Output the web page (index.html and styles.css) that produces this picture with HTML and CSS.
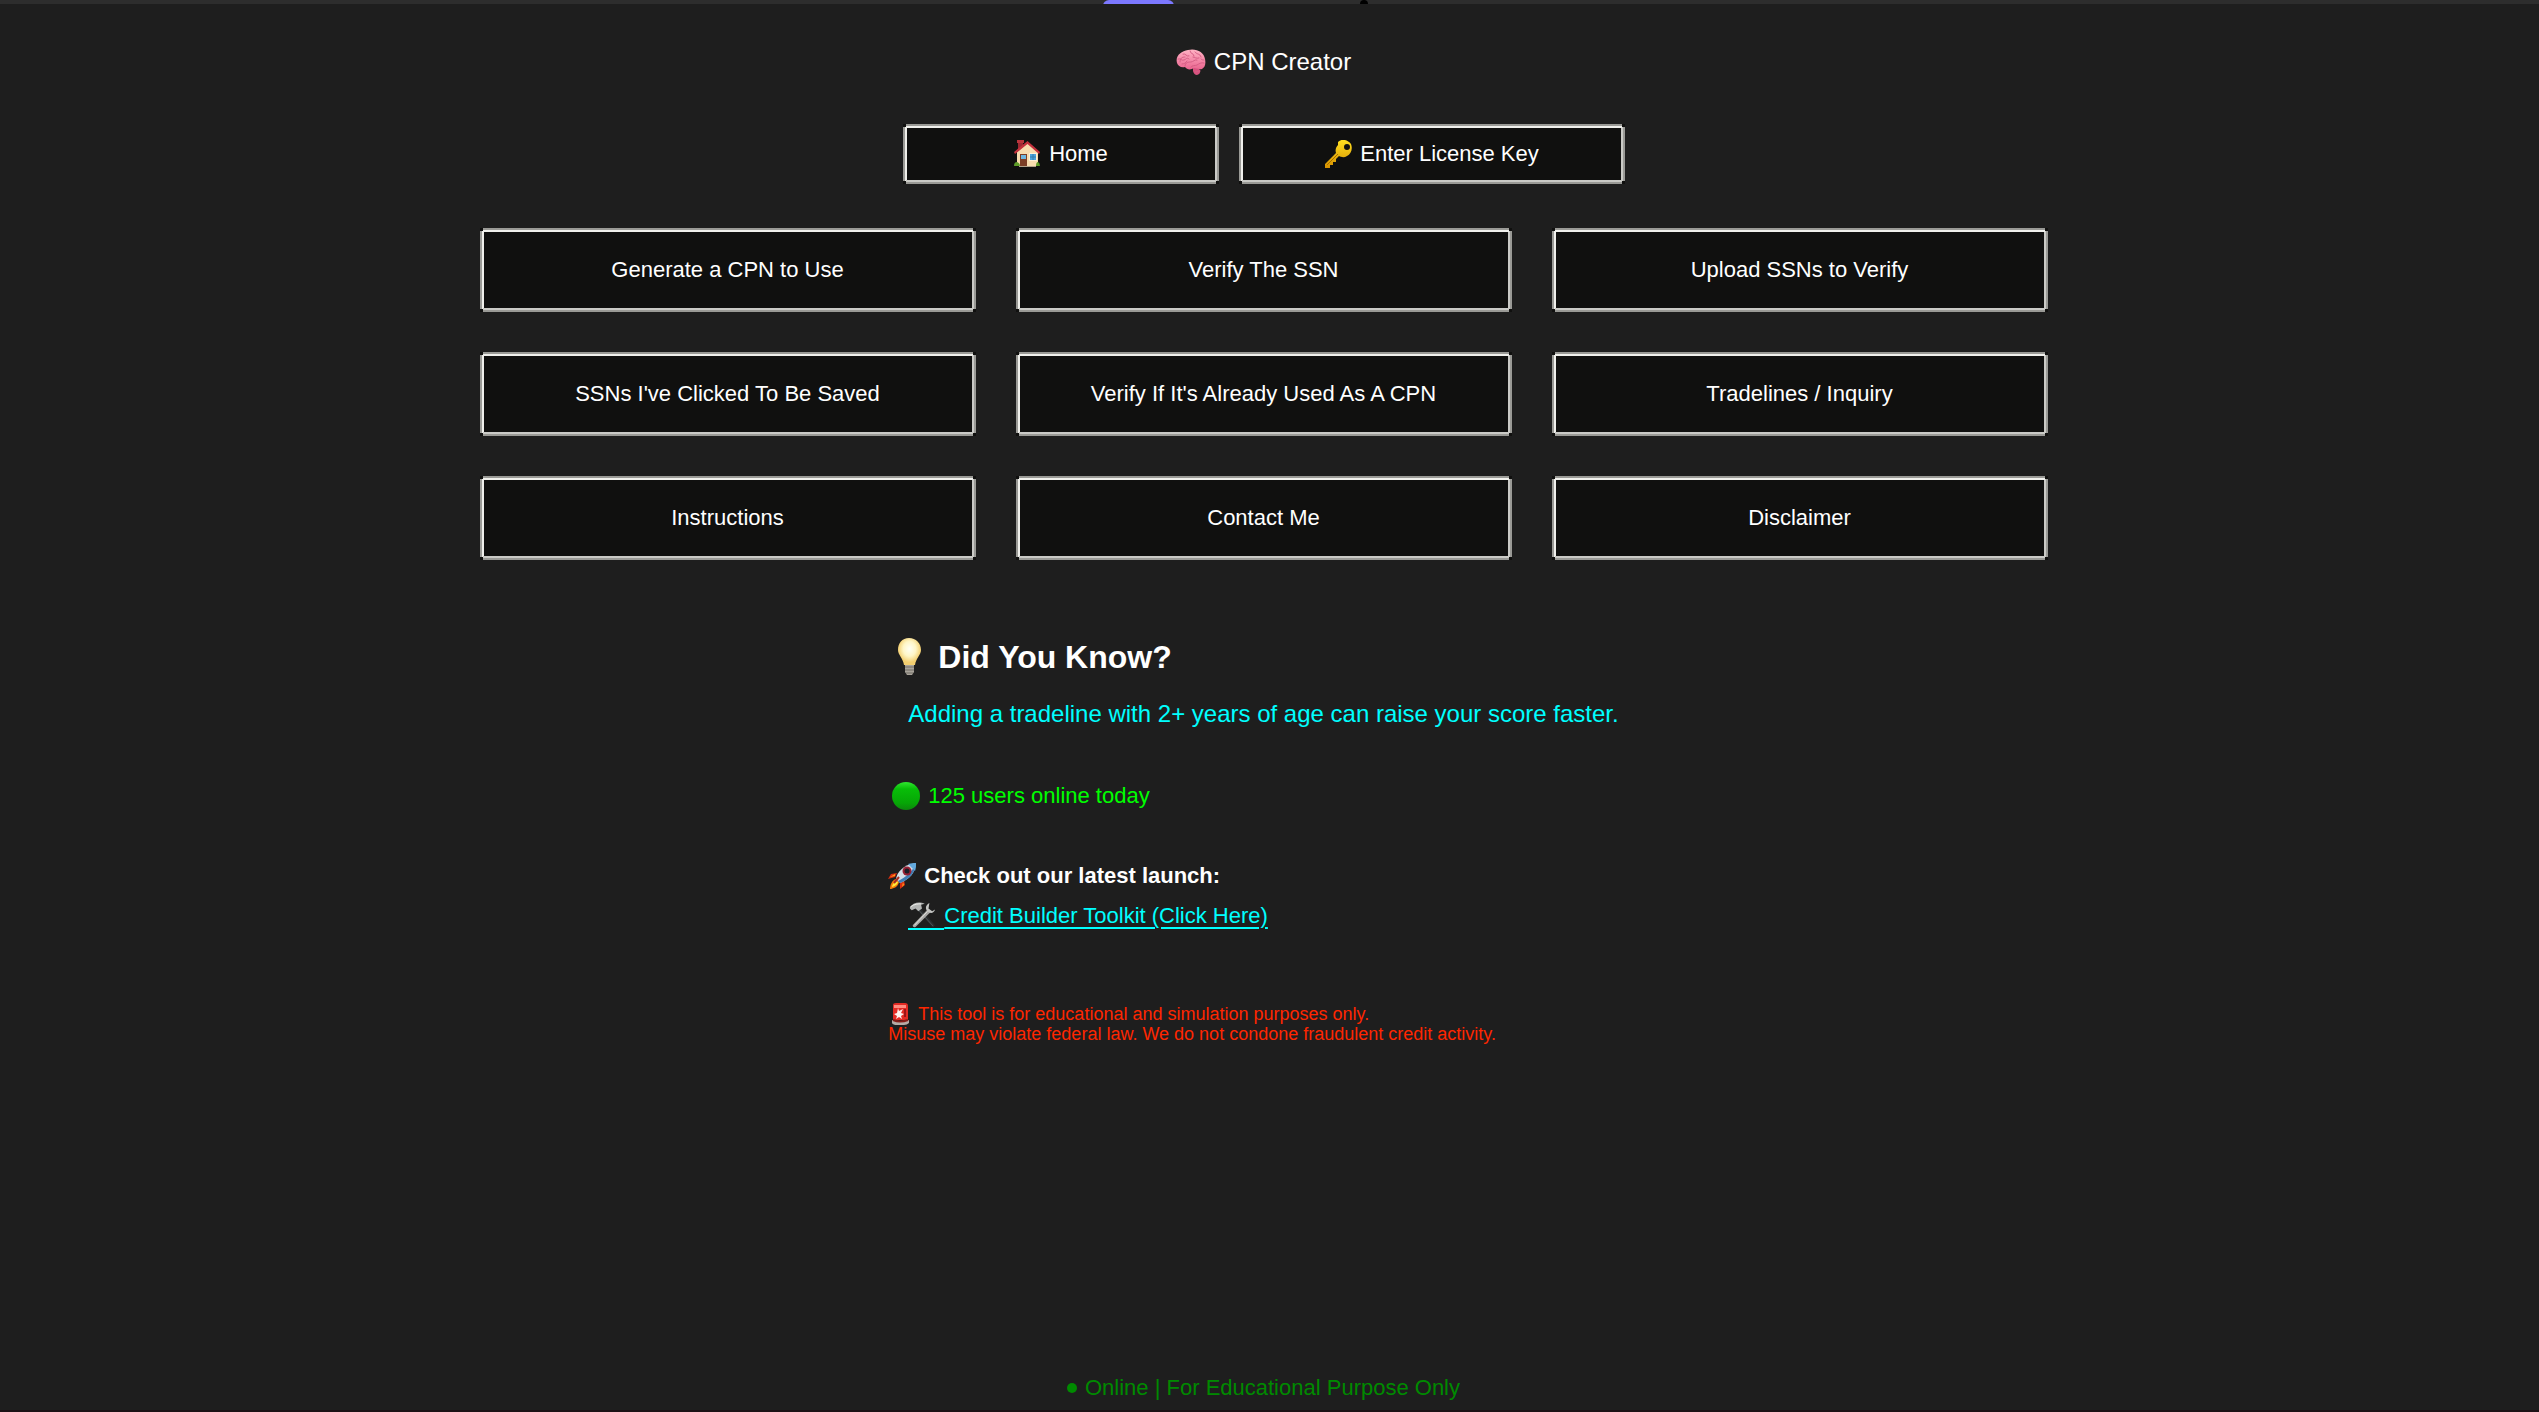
FILE: index.html
```html
<!DOCTYPE html>
<html lang="en">
<head>
<meta charset="utf-8">
<title>CPN Creator</title>
<link rel="stylesheet" href="styles.css">
</head>
<body>
<div class="topbar"><span class="tab"></span><span class="notch"></span></div>
<main class="page">
  <h1 class="title">
    <svg class="icon brain" viewBox="0 0 30 28" aria-hidden="true">
      <defs><linearGradient id="pink" x1="0" y1="0" x2="0" y2="1"><stop offset="0" stop-color="#ffb3c4"/><stop offset="1" stop-color="#ea6590"/></linearGradient></defs>
      <path d="M17 20q5-1 7 2 1 4-3 5-3 0-4-4z" fill="#d8527f"/>
      <path d="M1 15C-1 8 5 3 12 2c8-2 16 2 17 9 1 5 0 8-3 10-3 1-5-1-8-1-3 2-7 2-9-1-4 1-7-1-8-4z" fill="url(#pink)"/>
      <path d="M4 14c0-4 2-5 5-5M7 6c3-1 3 3 6 2M14 3c0 3 4 2 4 5M19 4c2 3 5 1 6 5M2 11c3-1 3 2 6 1s2-3 5-1M9 18c0-4 4-4 6-4s4-3 6-2M15 19c1-2 4-1 6-2s4-3 7-2M17 9c2 0 3 2 6 1M6 16c2 0 4-1 5-3M25 11c1 1 2 1 3 1M19 24l5-1" fill="none" stroke="#d65e85" stroke-width="1" stroke-linecap="round"/>
    </svg>
    CPN Creator
  </h1>

  <nav class="nav">
    <button class="button home" type="button">
      <svg class="icon" viewBox="0 0 28 28" aria-hidden="true">
        <path d="M5 1h5v9H5z" fill="#9e2932"/><path d="M4 0h7v3H4z" fill="#b9343b"/>
        <path d="M4 12 14.500 3 25 12v14H4z" fill="#f8dcae"/>
        <path d="m2 14-1-2L14.500 1 27 12l-1 2L14.500 4z" fill="#c4313d"/>
        <path d="M7 14h7v12H7z" fill="#7c3e25"/><path d="M8 15h5v4H8z" fill="#6fb5de"/>
        <path d="M16 13h8v8h-8z" fill="#fff0d3"/><path d="M17 14h6v6h-6z" fill="#4ba4dd"/><path d="M20 14v6M17 17h6" stroke="#377ca9"/>
        <path d="M1 26q0-4 3-4 3 1 3 4zM23 26q0-4 2-4 2 1 2 4z" fill="#5e9c28"/><path d="M6 26h17v1H6z" fill="#b3a28a"/>
      </svg>
      Home
    </button>
    <button class="button license" type="button">
      <svg class="icon" viewBox="0 0 28 28" aria-hidden="true">
        <defs><linearGradient id="gold" x1="0" y1="0" x2="0" y2="1"><stop offset="0" stop-color="#ffdf20"/><stop offset="1" stop-color="#d69100"/></linearGradient></defs>
        <path fill-rule="evenodd" d="M14 2c4-4 10-2 13 2 2 5 0 10-4 12-3 2-6 1-8 0l-3 3v3H9v3H6v3H1v-4l11-11c-1-3 0-6 2-8zm9 2a3 3 0 1 0 0 6 3 3 0 0 0 0-6z" fill="url(#gold)"/>
        <path d="m3 25 11-11" stroke="#a96d00"/>
      </svg>
      Enter License Key
    </button>
  </nav>

  <section class="grid">
    <button class="button tall" type="button">Generate a CPN to Use</button>
    <button class="button tall" type="button">Verify The SSN</button>
    <button class="button tall" type="button">Upload SSNs to Verify</button>
    <button class="button tall" type="button">SSNs I've Clicked To Be Saved</button>
    <button class="button tall" type="button">Verify If It's Already Used As A CPN</button>
    <button class="button tall" type="button">Tradelines / Inquiry</button>
    <button class="button tall" type="button">Instructions</button>
    <button class="button tall" type="button">Contact Me</button>
    <button class="button tall" type="button">Disclaimer</button>
  </section>

  <section class="info">
    <h2 class="heading">
      <svg class="icon bulb" viewBox="0 0 42 40" aria-hidden="true">
        <defs><radialGradient id="glow" cx=".5" cy=".4"><stop offset="0" stop-color="#fffff4"/><stop offset=".55" stop-color="#fff6c6"/><stop offset="1" stop-color="#f3cf70"/></radialGradient></defs>
        <path d="M21 1c7 0 12 5 12 12 0 5-5 8-6 15H16C15 21 10 18 10 13 10 6 14 1 21 1z" fill="url(#glow)"/>
        <path d="M17 28h9v7l-2 3h-5l-2-3z" fill="#a8a39a"/><path d="M17 30h9M17 33h9M18 36h7" stroke="#716c65"/>
      </svg>
      Did You Know?
    </h2>
    <p class="tip">Adding a tradeline with 2+ years of age can raise your score faster.</p>
    <p class="users">
      <svg class="icon" viewBox="0 0 28 28" aria-hidden="true">
        <defs><linearGradient id="green" x1="0" y1="0" x2="0" y2="1"><stop offset="0" stop-color="#2fe62f"/><stop offset=".25" stop-color="#08bd08"/><stop offset=".75" stop-color="#06a606"/><stop offset="1" stop-color="#0d850d"/></linearGradient></defs>
        <circle cx="14" cy="14" r="14" fill="url(#green)"/>
      </svg>
      125 users online today
    </p>
    <p class="launch">
      <svg class="icon" viewBox="0 0 28 28" aria-hidden="true">
        <path d="M9 11 3 12 0 17l7-2zM16 18l1 5-5 4v-7z" fill="#d92d10"/><path d="M7 12 2 15l5-1zM15 20l-1 5 2-2z" fill="#ff9c19"/>
        <path d="M8 17c-4 1-6 6-6 10 3 0 8-2 9-7z" fill="#f67d08"/><path d="M8 19c-2 1-4 4-4 6 3-1 5-2 6-5z" fill="#ffed39"/>
        <path d="M8 17c1-7 7-14 20-16-1 10-6 16-16 20z" fill="#d5dfe8"/><path d="M12 21C22 17 27 11 28 1 25 9 18 15 10 19z" fill="#3f7db6"/>
        <path d="M20 2c3-1 6-1 8-1 0 3 0 5-1 8z" fill="#63a9dd"/>
        <circle cx="19" cy="9" r="4.500" fill="#962033"/><circle cx="19" cy="9" r="2.500" fill="#191d27"/>
        <path d="m6 21 5-6" stroke="#a92b20" stroke-width="2"/>
      </svg>
      Check out our latest launch:
    </p>
    <a class="toolkit" href="#toolkit">
      <span class="tools"><svg class="icon" viewBox="0 0 28 28" aria-hidden="true">
        <path d="m6 5 4-1 18 21-2 2h-1z" fill="#282b2d"/><path d="m8 6 18 20" stroke="#50565a"/>
        <path d="m4 25 16-17 3 3L7 27q-3 1-3-2z" fill="#a8a8a6"/><path d="M6 25 20 10" stroke="#e1e1df"/>
        <path d="M22 1c-4 2-5 6-2 9s7 2 8-2l-3 2-4-3z" fill="#c4c5c3"/>
        <path d="m1 5 4-3c4-2 8-2 12 0l-4 1 1 4-4 3-3-3-4 2-2-2z" fill="#b3b5b4"/><path d="M2 5c4-3 8-3 11-3" fill="none" stroke="#efefed"/>
      </svg></span><span class="link-text">Credit Builder Toolkit (Click Here)</span>
    </a>
    <p class="warning">
      <span class="warning-line"><svg class="icon siren" viewBox="0 0 24 24" aria-hidden="true">
        <path d="M5 3q0-2 3-2h9q3 0 3 3v14H5z" fill="#e42b24"/><path d="M6 3h12v3H6z" fill="#ff8c80"/>
        <path d="M4 18q8 3 17 0v3q-2 2-5 2H9q-4 0-5-2z" fill="#b5aaa5"/><path d="M5 18q7 3 15 0" fill="none" stroke="#861d18" stroke-width="2"/>
        <path d="m10 6 1 3 4-2-2 4 3 1-3 2 1 3-3-2-3 2 1-3-3-2 3-1z" fill="#fff3ef"/><path d="M17 7v8" stroke="#9e1517" stroke-width="2"/>
      </svg>This tool is for educational and simulation purposes only.</span>
      Misuse may violate federal law. We do not condone fraudulent credit activity.
    </p>
  </section>
</main>
<footer class="footer"><span class="dot"></span>Online | For Educational Purpose Only</footer>
</body>
</html>
```
FILE: styles.css
```css
* {
  box-sizing: border-box;
}

body {
  margin: 0;
  min-height: 100vh;
  display: flex;
  flex-direction: column;
  background: #1e1e1e;
  border-bottom: 2px solid #1b1216;
  color: #fff;
  font: 22px/28px "Liberation Sans", Arial, sans-serif;
}

h1, h2, p {
  margin: 0;
}

/* Edge of the window above the page */
.topbar {
  position: relative;
  height: 4px;
  background: #2d2d2d;
  overflow: hidden;
}

.tab, .notch {
  position: absolute;
  top: 0;
}

.tab {
  left: 1103px;
  width: 71px;
  height: 12px;
  border-radius: 8px;
  background: #7c78ff;
}

.notch {
  left: 1360px;
  width: 8px;
  height: 8px;
  border-radius: 4px;
  background: #000;
}

.page {
  flex: 1;
  display: flex;
  flex-direction: column;
  align-items: center;
  padding: 44px 12px 40px 0;
}

.icon {
  flex: none;
  width: 28px;
  height: 28px;
}

.title, .heading, .users, .launch, .button {
  display: flex;
  align-items: center;
  gap: 8px;
}

.title {
  font-size: 24px;
  font-weight: 400;
}

.brain {
  width: 30px;
}

.nav {
  display: flex;
  gap: 20px;
  margin: 48px 0 44px;
}

/* Two-tone ridge frame with open corners */
.button {
  justify-content: center;
  height: 60px;
  padding: 0 20px;
  border: 0;
  color: #fff;
  font: inherit;
  background:
    linear-gradient(#9a9a96 0 2px, #f0f0ec 2px) 3px 0 / calc(100% - 6px) 4px no-repeat,
    linear-gradient(#cacac6 0 2px, #9a9a96 2px) 3px 100% / calc(100% - 6px) 4px no-repeat,
    linear-gradient(90deg, #9a9a96 0 2px, #f0f0ec 2px) 0 3px / 4px calc(100% - 6px) no-repeat,
    linear-gradient(90deg, #cacac6 0 2px, #9a9a96 2px) 100% 3px / 4px calc(100% - 6px) no-repeat,
    #10100f;
}

.home {
  width: 316px;
}

.license {
  width: 386px;
}

.grid {
  display: grid;
  grid-template-columns: repeat(3, 1fr);
  gap: 40px;
  width: 100%;
  max-width: 1568px;
}

.tall {
  height: 84px;
}

.info {
  margin-top: 79px;
}

.heading {
  font-size: 32px;
  line-height: 36px;
}

.bulb {
  width: 42px;
  height: 40px;
  margin: -2px 0;
}

.tip {
  margin: 25px 20px 54px;
  color: #0ff;
  font-size: 24px;
}

.users {
  padding-left: 4px;
  color: #0f0;
}

.launch {
  margin: 52px 0 12px;
  font-weight: 700;
}

.toolkit {
  display: flex;
  width: fit-content;
  margin-left: 20px;
  color: #0ff;
  text-decoration: none;
}

.tools {
  height: 28px;
  padding-right: 8px;
  border-bottom: 2px solid #0ff;
}

.tools .icon {
  display: block;
  height: 26px;
}

.link-text {
  text-decoration: underline 2px;
  text-underline-offset: 4px;
}

.warning {
  margin-top: 74px;
  color: #ff2600;
  font-size: 18px;
  line-height: 20px;
}

.warning-line {
  display: flex;
  align-items: center;
  gap: 6px;
}

.siren {
  width: 24px;
  height: 24px;
  margin: -2px 0;
}

.footer {
  display: flex;
  align-items: center;
  justify-content: center;
  gap: 8px;
  padding: 0 12px 8px 0;
  color: #008a00;
}

.dot {
  width: 10px;
  height: 10px;
  border-radius: 50%;
  background: #008a00;
}
```
